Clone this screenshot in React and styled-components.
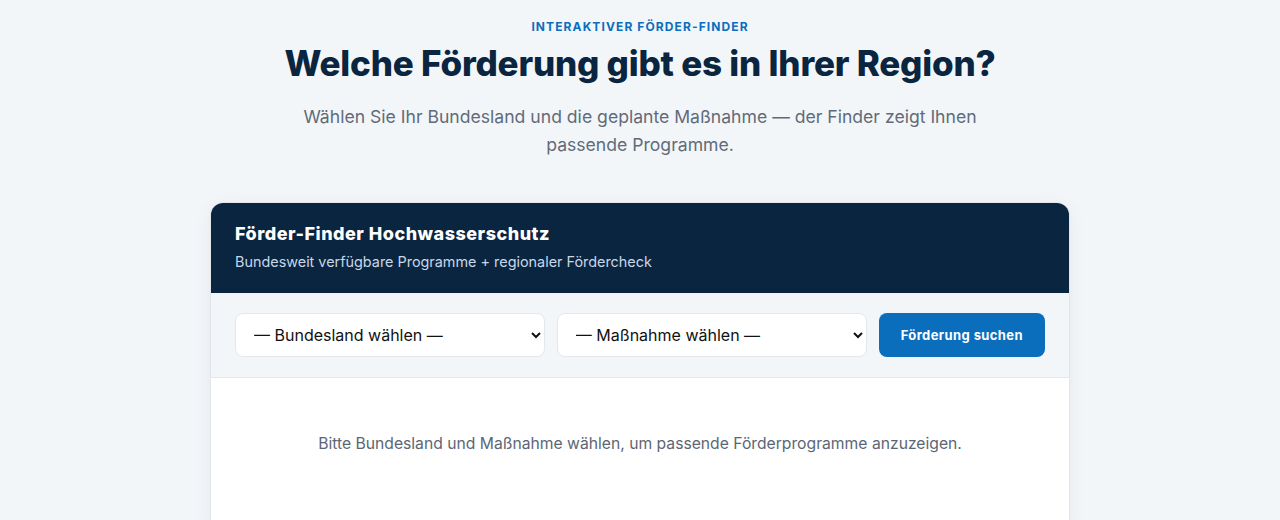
import React from "react";
import styled, { createGlobalStyle } from "styled-components";

const Global = createGlobalStyle`
  html, body { margin: 0; padding: 0; background: #f3f6f9; }
  body { font-family: Inter, "Noto Sans", sans-serif; color: #0a2540; }
  * { box-sizing: border-box; }
`;

const Section = styled.section`
  padding: 19px 24px 0;
  display: flex;
  flex-direction: column;
  align-items: center;
`;

const Eyebrow = styled.div`
  font-size: 12px;
  font-weight: 700;
  letter-spacing: 1.1px;
  color: #0b6ebd;
  text-transform: uppercase;
  line-height: 16px;
`;

const Title = styled.h2`
  margin: 6px 0 0;
  font-family: Inter, sans-serif;
  font-weight: 800;
  font-size: 35px;
  line-height: 44px;
  letter-spacing: -0.2px;
  color: #0a2540;
  text-align: center;
`;

const Lead = styled.p`
  margin: 18px 0 0;
  max-width: 720px;
  font-size: 17.6px;
  line-height: 28px;
  color: #5f6b7a;
  text-align: center;
`;

const Card = styled.div`
  margin-top: 44px;
  width: 858px;
  border-radius: 12px;
  overflow: hidden;
  background: #fff;
  box-shadow: 0 4px 18px rgba(10, 37, 64, 0.07), 0 0 0 1px rgba(10, 37, 64, 0.04);
`;

const CardHead = styled.div`
  background: #0a2540;
  padding: 19px 24px 21px;
`;

const CardTitle = styled.h3`
  margin: 0;
  font-weight: 800;
  font-size: 18px;
  line-height: 24px;
  letter-spacing: 0.5px;
  color: #fff;
`;

const CardSub = styled.p`
  margin: 6px 0 0;
  font-size: 14.4px;
  line-height: 20px;
  color: #c8d6e8;
`;

const Filters = styled.div`
  display: grid;
  grid-template-columns: 1fr 1fr auto;
  gap: 12px;
  padding: 20px 24px;
  background: #f3f6f9;
  border-bottom: 1px solid #e3e8ee;
`;

const Select = styled.select`
  height: 44px;
  padding: 0 12px 0 14px;
  border: 1px solid #e3e8ee;
  border-radius: 8px;
  background: #fff;
  font-family: Inter, sans-serif;
  font-size: 16px;
  color: #111;
`;

const Button = styled.button`
  height: 44px;
  padding: 0 22px;
  border: 0;
  border-radius: 8px;
  background: #0b6ebd;
  color: #fff;
  font-family: Inter, sans-serif;
  font-weight: 700;
  font-size: 13px;
  letter-spacing: 0.4px;
  cursor: pointer;
`;

const Result = styled.div`
  padding: 55px 24px 80px;
  text-align: center;
  font-size: 15.7px;
  line-height: 22px;
  color: #5b6675;
`;

export default function App() {
  return (
    <>
      <Global />
      <Section>
        <Eyebrow>Interaktiver Förder-Finder</Eyebrow>
        <Title>Welche Förderung gibt es in Ihrer Region?</Title>
        <Lead>
          Wählen Sie Ihr Bundesland und die geplante Maßnahme — der Finder zeigt Ihnen passende Programme.
        </Lead>
        <Card>
          <CardHead>
            <CardTitle>Förder-Finder Hochwasserschutz</CardTitle>
            <CardSub>Bundesweit verfügbare Programme + regionaler Fördercheck</CardSub>
          </CardHead>
          <Filters>
            <Select defaultValue="">
              <option value="">— Bundesland wählen —</option>
            </Select>
            <Select defaultValue="">
              <option value="">— Maßnahme wählen —</option>
            </Select>
            <Button>Förderung suchen</Button>
          </Filters>
          <Result>
            Bitte Bundesland und Maßnahme wählen, um passende Förderprogramme anzuzeigen.
          </Result>
        </Card>
      </Section>
    </>
  );
}
